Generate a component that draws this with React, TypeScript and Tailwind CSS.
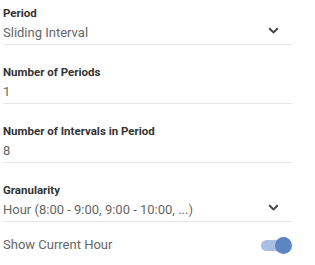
import React from "react";

function Chevron() {
  return (
    <svg width="11" height="7" viewBox="0 0 11 7" className="shrink-0 mb-[4px]">
      <path d="M1.2 1.2 L5.5 5.4 L9.8 1.2" fill="none" stroke="#444" strokeWidth="2" />
    </svg>
  );
}

function Field({ label, value, select }: { label: string; value: string; select?: boolean }) {
  return (
    <div className="flex flex-col">
      <div className="text-[11.5px] leading-[16px] font-bold text-[#333]">{label}</div>
      <div className="flex items-center justify-between h-[24px] pr-[13px] border-b border-[#e6e6e6]">
        <span className="text-[13px] text-[#666]">{value}</span>
        {select && <Chevron />}
      </div>
    </div>
  );
}

export default function App() {
  return (
    <div
      className="w-[315px] h-[265px] bg-white pl-[3px] pt-[5px]"
      style={{ fontFamily: "Roboto, 'Noto Sans', sans-serif" }}
    >
      <div className="w-[289px] flex flex-col gap-[19px]">
        <Field label="Period" value="Sliding Interval" select />
        <Field label="Number of Periods" value="1" />
        <Field label="Number of Intervals in Period" value="8" />
        <Field label="Granularity" value="Hour (8:00 - 9:00, 9:00 - 10:00, ...)" select />
      </div>
      <div className="w-[289px] h-[20px] flex items-center justify-between mt-[13px]">
        <span className="text-[13px] text-[#666]">Show Current Hour</span>
        <div className="relative w-[31px] h-[17px] flex items-center">
          <div className="w-[25px] h-[11px] rounded-full bg-[#a9c0e4]" />
          <div className="absolute right-0 top-0 w-[17px] h-[17px] rounded-full bg-[#5b86c4]" />
        </div>
      </div>
    </div>
  );
}
